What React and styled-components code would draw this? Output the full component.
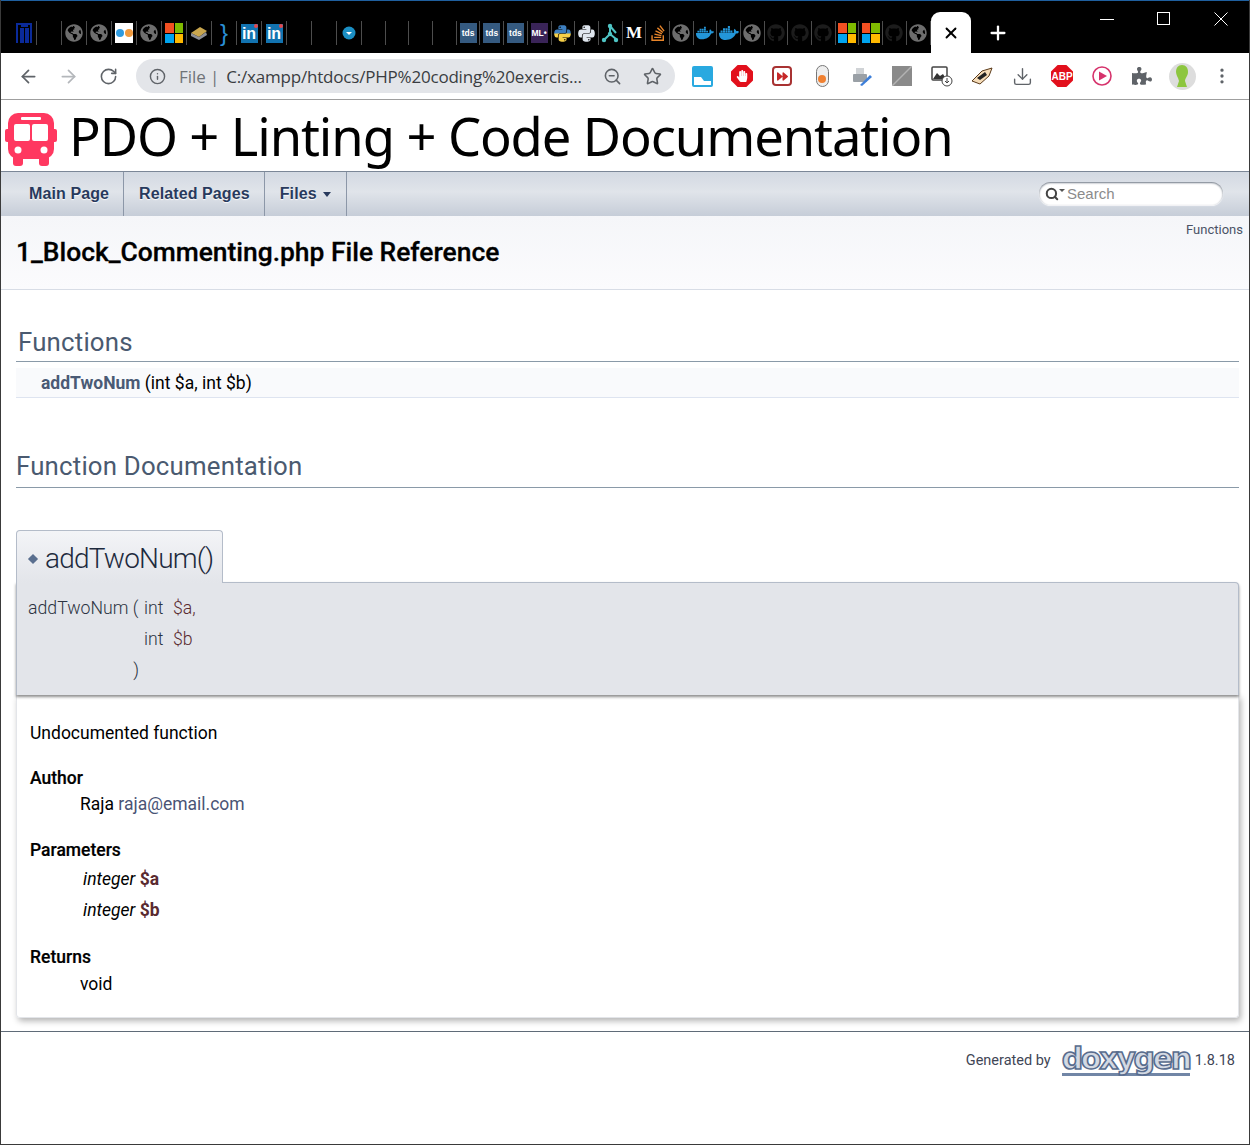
import React from 'react'
import styled, { createGlobalStyle } from 'styled-components'
import { ArrowLeft, ArrowRight, RotateCw, Info, ZoomOut, Star, Download, X, Plus, MoreVertical, Search } from 'lucide-react'
import { FaGlobeAmericas, FaGithub, FaPython, FaDocker, FaStackOverflow, FaPuzzlePiece, FaHandPaper, FaForward } from 'react-icons/fa'

const Global = createGlobalStyle`
	html, body {
		margin: 0;
		padding: 0;
		background: #fff;
	}
	body {
		font-family: Roboto, "Liberation Sans", sans-serif;
		color: #000;
	}
`
const Page = styled.div`
	width: 1250px;
	height: 1145px;
	box-sizing: border-box;
	overflow: hidden;
	border-left: 1px solid #3a3a3a;
	border-right: 1px solid #3a3a3a;
	border-bottom: 1px solid #3a3a3a;
	display: flex;
	flex-direction: column;
`
const TabStrip = styled.div`
	height: 53px;
	flex: none;
	margin: 0 -1px;
	box-sizing: border-box;
	background: #000;
	border-top: 1px solid #1f5f9e;
	display: flex;
	align-items: flex-end;
	padding-left: 12px;
`
const Slot = styled.div`
	width: ${props => props.$w}px;
	height: 24px;
	margin-bottom: 8px;
	flex: none;
	box-sizing: border-box;
	border-right: 1px solid #4d4d4d;
	display: flex;
	align-items: center;
	justify-content: center;
	font-size: 18px;
`
const TdsIcon = styled.div`
	width: 17px;
	height: 20px;
	background: ${props => props.$bg};
	color: #fff;
	font: bold 8.5px "Liberation Sans", sans-serif;
	display: flex;
	align-items: center;
	justify-content: center;
`
const LinkedinTile = styled.div`
	width: 17px;
	height: 19px;
	background: #1273b0;
	color: #fff;
	font: bold 16px/19px "Liberation Sans", sans-serif;
	text-align: center;
	position: relative;
	&::after {
		content: "";
		position: absolute;
		top: 0;
		right: 0;
		width: 4px;
		height: 4px;
		border-radius: 50%;
		background: #e5484d;
	}
`
const MsGrid = styled.div`
	width: 18px;
	height: 20px;
	display: grid;
	grid-template-columns: 1fr 1fr;
	grid-template-rows: 1fr 1fr;
	gap: 1px;
`
const MsCell = styled.div`
	background: ${props => props.$c};
`
const WhiteTile = styled.div`
	width: 18px;
	height: 20px;
	background: #fff;
	display: flex;
	align-items: center;
	justify-content: center;
	gap: 1px;
`
const Dot = styled.div`
	width: 8px;
	height: 8px;
	border-radius: 50%;
	background: ${props => props.$c};
`
const Glyph = styled.span`
	color: ${props => props.$c};
	font: ${props => props.$font};
`
const ActiveTab = styled.div`
	width: 40px;
	height: 41px;
	margin-left: 0;
	flex: none;
	background: #fff;
	border-radius: 9px 9px 0 0;
	display: flex;
	align-items: center;
	justify-content: center;
	color: #000;
`
const NewTab = styled.div`
	width: 54px;
	height: 41px;
	flex: none;
	display: flex;
	align-items: center;
	justify-content: center;
	color: #fff;
`
const WindowControls = styled.div`
	margin-left: auto;
	padding-right: 1px;
	align-self: flex-start;
	display: flex;
	color: #fff;
`
const WindowButton = styled.div`
	width: 57px;
	height: 36px;
	display: flex;
	align-items: center;
	justify-content: center;
`
const Toolbar = styled.div`
	height: 47px;
	flex: none;
	box-sizing: border-box;
	border-bottom: 1px solid #9f9f9f;
	background: #fff;
	display: flex;
	align-items: center;
	padding: 0 0 0 7px;
	color: #5f6368;
`
const NavButton = styled.div`
	width: 40px;
	display: flex;
	justify-content: center;
	color: ${props => props.$off ? '#b4b7bb' : '#5f6368'};
`
const Omnibox = styled.div`
	width: 539px;
	height: 34px;
	margin: 0 7px 0 8px;
	flex: none;
	box-sizing: border-box;
	border-radius: 17px;
	background: #e3e5e9;
	display: flex;
	align-items: center;
	padding: 0 13px 0 13px;
	font-family: "Open Sans", sans-serif;
	font-size: 17px;
`
const Scheme = styled.span`
	margin-left: 13px;
	color: #6f7378;
`
const SchemeBar = styled.span`
	margin: 0 7px 0 4px;
	color: #6f7378;
`
const Url = styled.span`
	flex: 1;
	min-width: 0;
	color: #3a3d41;
	white-space: nowrap;
	letter-spacing: -0.2px;
`
const OmniIcons = styled.div`
	display: flex;
	gap: 21px;
	margin-left: 19px;
`
const Extensions = styled.div`
	display: flex;
`
const Ext = styled.div`
	width: 40px;
	display: flex;
	justify-content: center;
	align-items: center;
	font-size: 20px;
	color: ${props => props.$c || '#5f6368'};
`
const OctagonBadge = styled.div`
	width: 22px;
	height: 22px;
	background: #e2101c;
	clip-path: polygon(30% 0, 70% 0, 100% 30%, 100% 70%, 70% 100%, 30% 100%, 0 70%, 0 30%);
	color: #fff;
	font: bold 10px "Liberation Sans", sans-serif;
	display: flex;
	align-items: center;
	justify-content: center;
`
const RedSquare = styled.div`
	width: 20px;
	height: 20px;
	box-sizing: border-box;
	border: 2px solid #a83232;
	border-radius: 4px;
	color: #c62828;
	font-size: 11px;
	display: flex;
	align-items: center;
	justify-content: center;
`
const Pill = styled.div`
	width: 13px;
	height: 22px;
	box-sizing: border-box;
	border: 1.5px solid #777;
	border-radius: 7px;
	background: #eee;
	display: flex;
	align-items: flex-end;
	justify-content: center;
	padding-bottom: 3px;
`
const GreySquare = styled.div`
	width: 20px;
	height: 20px;
	background: linear-gradient(135deg, #8a8a8a 45%, #b3b3b3 50%, #8a8a8a 55%);
`
const Avatar = styled.div`
	width: 27px;
	height: 27px;
	border-radius: 50%;
	background: #ddd;
	display: flex;
	align-items: center;
	justify-content: center;
`
const Body = styled.div`
	flex: 1;
	display: flex;
	flex-direction: column;
`
const TitleArea = styled.div`
	height: 71px;
	flex: none;
	box-sizing: border-box;
	display: flex;
	align-items: center;
	padding-left: 4px;
	gap: 12px;
`
const BusLogo = styled.svg`
	flex: none;
	margin-top: 8px;
`
const ProjectName = styled.div`
	font-family: "Noto Sans", sans-serif;
	font-size: 52.5px;
	letter-spacing: -1.1px;
	line-height: 71px;
	color: #000;
	white-space: nowrap;
`
const NavBar = styled.div`
	height: 45px;
	flex: none;
	box-sizing: border-box;
	border-top: 1px solid #7b8797;
	background: linear-gradient(#d3d9e2, #e0e4ea 45%, #c6cdd8);
	display: flex;
	align-items: stretch;
	justify-content: space-between;
`
const NavItems = styled.div`
	display: flex;
`
const NavItem = styled.div`
	padding: 0 ${props => props.$r || 14}px 0 ${props => props.$l || 15}px;
	border-right: 1px solid #8c97a8;
	display: flex;
	align-items: center;
	font: bold 16px "Liberation Sans", sans-serif;
	letter-spacing: 0.1px;
	color: #283a5d;
	text-shadow: 0 1px 1px rgba(255, 255, 255, 0.9);
`
const Caret = styled.span`
	margin-left: 6px;
	border-left: 4.5px solid transparent;
	border-right: 4.5px solid transparent;
	border-top: 5px solid #283a5d;
`
const SearchBox = styled.div`
	width: 184px;
	height: 23px;
	margin: 10px 26px 0 0;
	box-sizing: border-box;
	border-radius: 12px;
	background: #fff;
	box-shadow: inset 0 1px 2px #6f7885, 0 1px 1px #f5f6f8;
	display: flex;
	align-items: center;
	padding-left: 6px;
	font: 15px "Liberation Sans", sans-serif;
	color: #8b8b8b;
`
const SearchCaret = styled.span`
	margin: 7px 2px 0 0;
	border-left: 3px solid transparent;
	border-right: 3px solid transparent;
	border-top: 3px solid #555;
	align-self: flex-start;
`
const Header = styled.div`
	height: 74px;
	flex: none;
	box-sizing: border-box;
	background: linear-gradient(#f5f6f9, #fbfbfd);
	border-bottom: 1px solid #d8dde6;
	display: flex;
	justify-content: space-between;
	padding: 0 6px 0 15px;
`
const PageTitle = styled.h1`
	margin: 21px 0 0;
	font-size: 26.4px;
	line-height: 30px;
	font-weight: 500;
	-webkit-text-stroke: 0.3px #000;
`
const Summary = styled.div`
	margin-top: 6px;
	font-size: 13px;
	line-height: 16px;
	color: #4a5266;
`
const Contents = styled.div`
	padding: 0 10px 0 15px;
`
const GroupHeader = styled.h2`
	margin: ${props => props.$top}px 0 0;
	padding: 0 0 ${props => props.$pb}px ${props => props.$indent}px;
	border-bottom: 1px solid #8a9aa8;
	font-size: 25.8px;
	line-height: 30px;
	font-weight: 400;
	color: #4a5a70;
	letter-spacing: 0.2px;
`
const MemberRow = styled.div`
	margin-top: 6px;
	height: 30px;
	box-sizing: border-box;
	background: #f9fafc;
	border-bottom: 1px solid #dee4f0;
	padding-left: 25px;
	font-size: 17.5px;
	line-height: 31px;
`
const MemberLink = styled.span`
	font-weight: 700;
	color: #4a5a75;
`
const MemTitle = styled.div`
	margin: 42px 0 -1px;
	width: 207px;
	height: 53px;
	box-sizing: border-box;
	border: 1px solid #b4bcc9;
	border-bottom: none;
	border-radius: 4px 4px 0 0;
	background: linear-gradient(#f3f4f7, #e3e5ea);
	position: relative;
	z-index: 1;
	display: flex;
	align-items: center;
	padding: 3px 0 0 12px;
	font-size: 28px;
	letter-spacing: -0.8px;
	font-weight: 300;
	color: #1d2a3d;
`
const Bullet = styled.span`
	width: 8px;
	height: 8px;
	margin-right: 8px;
	flex: none;
	background: #5a6f8f;
	transform: rotate(45deg) scale(0.9);
`
const Memproto = styled.div`
	height: 113px;
	box-sizing: border-box;
	background: #e3e5ea;
	border: 1px solid #b4bcc9;
	border-bottom: none;
	border-radius: 0 4px 0 0;
	box-shadow: 0 2px 3px rgba(0, 0, 0, 0.45);
	position: relative;
	padding: 10px 0 0 11px;
	display: grid;
	grid-template-columns: 111px 34px auto;
	grid-auto-rows: 31px;
	justify-content: start;
	font-size: 17.7px;
	line-height: 31px;
	font-weight: 300;
	color: #2c3442;
`
const ProtoType = styled.span`
	padding-left: 5px;
`
const ProtoClose = styled.span`
	text-align: right;
`
const ParamName = styled.span`
	color: #5a2a30;
`
const Memdoc = styled.div`
	height: 323px;
	box-sizing: border-box;
	border: 1px solid #e3e5e9;
	border-top: none;
	border-radius: 0 0 4px 4px;
	box-shadow: 2px 3px 6px rgba(0, 0, 0, 0.3);
	padding: 25px 13px 0;
	font-size: 17.5px;
	line-height: 27px;
`
const DocLine = styled.p`
	margin: 0;
`
const DocLabel = styled.div`
	margin-top: ${props => props.$top}px;
	font-weight: 500;
	-webkit-text-stroke: 0.2px #000;
`
const DocValue = styled.div`
	padding-left: 50px;
	line-height: ${props => props.$lh || 27}px;
`
const Email = styled.span`
	color: #4a5475;
`
const ParamRow = styled.div`
	padding-left: 53px;
	line-height: 31px;
`
const ParamType = styled.em`
	font-style: italic;
`
const ParamStrong = styled.strong`
	color: #5a2a30;
`
const Footer = styled.div`
	margin-top: 13px;
	border-top: 1px solid #5f6b78;
	display: flex;
	justify-content: flex-end;
	align-items: center;
	height: 56px;
	padding-right: 14px;
	font-size: 14.5px;
	color: #3f4656;
`
const Doxy = styled.span`
	margin: 0 5px 0 11px;
	font: bold 30px/28px "DejaVu Sans", sans-serif;
	letter-spacing: -2.3px;
	color: #d3d9e3;
	-webkit-text-stroke: 1.6px #586c8e;
	border-bottom: 3px solid #7186a6;
`

const MsLogo = () => (
	<MsGrid>
		<MsCell $c="#f25022" />
		<MsCell $c="#7fba00" />
		<MsCell $c="#00a4ef" />
		<MsCell $c="#ffb900" />
	</MsGrid>
)

const Linkedin = () => <LinkedinTile>in</LinkedinTile>

const slot25 = [
	<svg width="18" height="22" viewBox="0 0 18 22"><path d="M2 21V2h14v19M6 21V7h2v14M11 21V7h2v14M6 4h7" fill="none" stroke="#0a2a9a" strokeWidth="2" /></svg>,
	null,
	<FaGlobeAmericas color="#6e6e6e" />,
	<FaGlobeAmericas color="#6e6e6e" />,
	<WhiteTile><Dot $c="#2f9be0" /><Dot $c="#f09a3e" /></WhiteTile>,
	<FaGlobeAmericas color="#6e6e6e" />,
	<MsLogo />,
	<svg width="18" height="18" viewBox="0 0 18 18"><path d="M1 9l9-6 7 4-8 6z" fill="#c9a64e" /><path d="M1 12l8 4 8-5-1-3-7 5-8-4z" fill="#8d8f96" /></svg>,
	<Glyph $c="#2a8fd6" $font="24px 'Liberation Sans', sans-serif">{'}'}</Glyph>,
	<Linkedin />,
	<Linkedin />,
	null,
	null,
	<svg width="14" height="16" viewBox="0 0 14 16"><circle cx="7" cy="8" r="6.5" fill="#1b8fc4" /><path d="M4 7h6l-3 3z" fill="#fff" /></svg>,
]

const slot24 = [
	null,
	null,
	null,
	null,
	<TdsIcon $bg="#355a80">tds</TdsIcon>,
	<TdsIcon $bg="#355a80">tds</TdsIcon>,
	<TdsIcon $bg="#355a80">tds</TdsIcon>,
	<TdsIcon $bg="#3a2458">ML•</TdsIcon>,
	<FaPython fill="url(#pyGrad)" size={19} />,
	<FaPython color="#dfe6ee" size={19} />,
	<svg width="18" height="20" viewBox="0 0 18 20"><path d="M9 3v8M9 11L3 17M9 11l6 5M9 3l6 7" stroke="#4fc4c4" strokeWidth="2" fill="none" /><circle cx="9" cy="3" r="2.2" fill="#4fc4c4" /><circle cx="9" cy="11" r="2.2" fill="#4fc4c4" /><circle cx="3" cy="17" r="2.2" fill="#4fc4c4" /><circle cx="15" cy="17" r="2.2" fill="#4fc4c4" /></svg>,
	<Glyph $c="#fff" $font="bold 17px 'Liberation Serif', serif">M</Glyph>,
	<FaStackOverflow color="#e8852a" />,
	<FaGlobeAmericas color="#6e6e6e" />,
	<FaDocker color="#2396d8" />,
	<FaDocker color="#2396d8" size={20} />,
	<FaGlobeAmericas color="#6e6e6e" />,
	<FaGithub color="#1c1c1c" />,
	<FaGithub color="#1c1c1c" />,
	<FaGithub color="#1c1c1c" />,
	<MsLogo />,
	<MsLogo />,
	<FaGithub color="#1c1c1c" />,
	<FaGlobeAmericas color="#6e6e6e" />,
]

function App() {
	return (
		<Page>
			<Global />
			<svg width="0" height="0" aria-hidden="true">
				<defs>
					<linearGradient id="pyGrad" x1="0" y1="0" x2="0" y2="1">
						<stop offset="48%" stopColor="#3d7fc0" />
						<stop offset="52%" stopColor="#f7d048" />
					</linearGradient>
				</defs>
			</svg>
			<TabStrip>
				{slot25.map((icon, i) => <Slot key={i} $w={25}>{icon}</Slot>)}
				{slot24.map((icon, i) => <Slot key={i} $w={23.7}>{icon}</Slot>)}
				<ActiveTab><X size={18} strokeWidth={2.5} /></ActiveTab>
				<NewTab><Plus size={22} strokeWidth={2.5} /></NewTab>
				<WindowControls>
					<WindowButton>
						<svg width="14" height="14" viewBox="0 0 14 14"><path d="M0 7.5h14" stroke="#fff" /></svg>
					</WindowButton>
					<WindowButton>
						<svg width="14" height="14" viewBox="0 0 14 14"><rect x="0.5" y="0.5" width="12" height="12" fill="none" stroke="#fff" /></svg>
					</WindowButton>
					<WindowButton>
						<svg width="14" height="14" viewBox="0 0 14 14"><path d="M0.5 0.5l13 13M13.5 0.5l-13 13" stroke="#fff" /></svg>
					</WindowButton>
				</WindowControls>
			</TabStrip>
			<Toolbar>
				<NavButton><ArrowLeft size={21} /></NavButton>
				<NavButton $off><ArrowRight size={21} /></NavButton>
				<NavButton><RotateCw size={19} /></NavButton>
				<Omnibox>
					<Info size={17} />
					<Scheme>File</Scheme>
					<SchemeBar>|</SchemeBar>
					<Url>C:/xampp/htdocs/PHP%20coding%20exercis...</Url>
					<OmniIcons>
						<ZoomOut size={19} />
						<Star size={19} />
					</OmniIcons>
				</Omnibox>
				<Extensions>
					<Ext>
						<svg width="21" height="21" viewBox="0 0 21 21"><rect width="21" height="21" rx="2" fill="#29a9e0" /><path d="M2 11h7l3 4h7v4H2z" fill="#fff" /></svg>
					</Ext>
					<Ext><OctagonBadge><FaHandPaper size={12} /></OctagonBadge></Ext>
					<Ext><RedSquare><FaForward /></RedSquare></Ext>
					<Ext>
						<Pill><Dot $c="#f08030" /></Pill>
					</Ext>
					<Ext>
						<svg width="22" height="22" viewBox="0 0 22 22"><rect x="2" y="9" width="14" height="8" rx="1" fill="#9aa0a6" /><rect x="5" y="3" width="8" height="6" fill="#d0d3d6" /><path d="M9 20l10-10 2 2-10 9z" fill="#3d7fd9" /></svg>
					</Ext>
					<Ext><GreySquare /></Ext>
					<Ext>
						<svg width="22" height="22" viewBox="0 0 22 22"><rect x="1" y="2" width="15" height="13" rx="1" fill="none" stroke="#444" strokeWidth="1.5" /><path d="M2 14l4-6 3 3 3-2 3 5z" fill="#333" /><circle cx="16" cy="16" r="5" fill="#fff" stroke="#444" /><path d="M16 13v5M14 16l2 2 2-2" fill="none" stroke="#444" /></svg>
					</Ext>
					<Ext>
						<svg width="22" height="18" viewBox="0 0 22 18"><path d="M1 14L11 4l10-3-3 8-9 8z" fill="#f6dcb8" stroke="#5a3a1a" /><path d="M6 11l8-6 2 3-7 5z" fill="#222" /></svg>
					</Ext>
					<Ext><Download size={21} strokeWidth={1.6} /></Ext>
					<Ext><OctagonBadge>ABP</OctagonBadge></Ext>
					<Ext $c="#d81b60">
						<svg width="22" height="22" viewBox="0 0 22 22"><circle cx="11" cy="11" r="9" fill="none" stroke="#d6336c" strokeWidth="1.6" /><path d="M8 6.5l8 4.5-8 4.5z" fill="#d6336c" /></svg>
					</Ext>
					<Ext><FaPuzzlePiece /></Ext>
					<Ext>
						<Avatar>
							<svg width="14" height="24" viewBox="0 0 14 24"><path d="M7 1c4 0 6 3 6 7s-3 6-3 9l2 6H2l2-6C3 13 1 11 1 8c0-4 2-7 6-7z" fill="#8dc63f" /></svg>
						</Avatar>
					</Ext>
					<Ext><MoreVertical size={20} /></Ext>
				</Extensions>
			</Toolbar>
			<Body>
				<TitleArea>
					<BusLogo width="52" height="53" viewBox="0 0 52 53">
						<rect x="0" y="16" width="5" height="13" rx="2" fill="#ff3860" />
						<rect x="47" y="16" width="5" height="13" rx="2" fill="#ff3860" />
						<rect x="8" y="42" width="10" height="11" rx="3" fill="#ff3860" />
						<rect x="34" y="42" width="10" height="11" rx="3" fill="#ff3860" />
						<rect x="3" y="0" width="46" height="46" rx="10" fill="#ff3860" />
						<rect x="16" y="4" width="20" height="3" rx="1" fill="#fff" />
						<rect x="9" y="11" width="16" height="17" rx="2" fill="#fff" />
						<rect x="27" y="11" width="16" height="17" rx="2" fill="#fff" />
						<circle cx="13" cy="37" r="3.5" fill="#fff" />
						<circle cx="39" cy="37" r="3.5" fill="#fff" />
					</BusLogo>
					<ProjectName>PDO + Linting + Code Documentation</ProjectName>
				</TitleArea>
				<NavBar>
					<NavItems>
						<NavItem $l={28}>Main Page</NavItem>
						<NavItem>Related Pages</NavItem>
						<NavItem $r={15}>Files<Caret /></NavItem>
					</NavItems>
					<SearchBox>
						<Search size={14} strokeWidth={3.5} color="#444" />
						<SearchCaret />
						Search
					</SearchBox>
				</NavBar>
				<Header>
					<PageTitle>1_Block_Commenting.php File Reference</PageTitle>
					<Summary>Functions</Summary>
				</Header>
				<Contents>
					<GroupHeader $top={37} $indent={2} $pb={4}>Functions</GroupHeader>
					<MemberRow>
						<MemberLink>addTwoNum</MemberLink> (int $a, int $b)
					</MemberRow>
					<GroupHeader $top={53} $indent={0} $pb={6}>Function Documentation</GroupHeader>
					<MemTitle><Bullet />addTwoNum()</MemTitle>
					<Memproto>
						<span>addTwoNum (</span><ProtoType>int</ProtoType><ParamName>$a,</ParamName>
						<span /><ProtoType>int</ProtoType><ParamName>$b</ParamName>
						<ProtoClose>)</ProtoClose>
					</Memproto>
					<Memdoc>
						<DocLine>Undocumented function</DocLine>
						<DocLabel $top={18}>Author</DocLabel>
						<DocValue $lh={25}>Raja <Email>raja@email.com</Email></DocValue>
						<DocLabel $top={20}>Parameters</DocLabel>
						<ParamRow><ParamType>integer</ParamType> <ParamStrong>$a</ParamStrong></ParamRow>
						<ParamRow><ParamType>integer</ParamType> <ParamStrong>$b</ParamStrong></ParamRow>
						<DocLabel $top={18}>Returns</DocLabel>
						<DocValue>void</DocValue>
					</Memdoc>
				</Contents>
				<Footer>
					Generated by<Doxy>doxygen</Doxy>1.8.18
				</Footer>
			</Body>
		</Page>
	)
}

export default App
